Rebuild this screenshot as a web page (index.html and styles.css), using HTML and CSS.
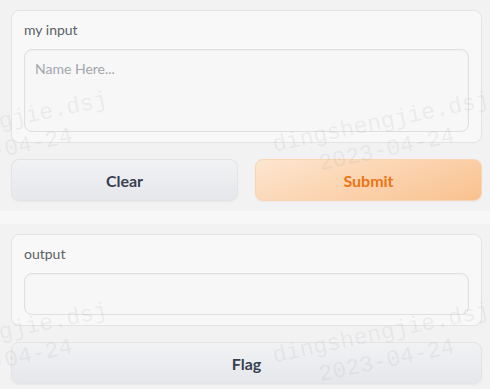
FILE: index.html
```html
<!DOCTYPE html>
<html lang="en">
<head>
    <meta charset="UTF-8">
    <meta name="viewport" content="width=device-width, initial-scale=1.0">
    <title>Gradio Demo</title>
    <link rel="stylesheet" href="styles.css">
</head>
<body>
    <div class="app">
        <div class="panel">
            <div class="block">
                <label class="block-label" for="name">my input</label>
                <textarea id="name" class="input-area" rows="3" placeholder="Name Here..."></textarea>
            </div>
            <div class="btn-row">
                <button class="btn">Clear</button>
                <button class="btn primary">Submit</button>
            </div>
        </div>

        <div class="panel">
            <div class="block">
                <label class="block-label" for="out">output</label>
                <textarea id="out" class="output-area" rows="1"></textarea>
            </div>
            <div class="btn-row">
                <button class="btn">Flag</button>
            </div>
        </div>
    </div>

    <div class="watermarks">
        <div class="wm" style="left:-112px; top:132px;"><span>dingshengjie.dsj</span><span>2023-04-24</span></div>
        <div class="wm" style="left:270px; top:132px;"><span>dingshengjie.dsj</span><span>2023-04-24</span></div>
        <div class="wm" style="left:-112px; top:343px;"><span>dingshengjie.dsj</span><span>2023-04-24</span></div>
        <div class="wm" style="left:270px; top:343px;"><span>dingshengjie.dsj</span><span>2023-04-24</span></div>
    </div>
</body>
</html>
```

FILE: styles.css
```css
* {
    margin: 0;
    padding: 0;
    box-sizing: border-box;
}
body {
    background: #f7f7f7;
    font-family: 'Lato', 'Noto Sans', sans-serif;
    overflow: hidden;
    width: 490px;
    height: 389px;
}
.app {
    display: flex;
    flex-direction: column;
    gap: 13px;
}
.panel {
    background: #f2f2f3;
    padding: 10px 8px 10px 11px;
    display: flex;
    flex-direction: column;
    gap: 16px;
}
.block {
    background: #f8f8f8;
    border: 1px solid #e3e3e3;
    border-radius: 8px;
    padding: 9px 12px 10px 12px;
    display: flex;
    flex-direction: column;
}
.block-label {
    color: #5b5f66;
    font-size: 14px;
    line-height: 20px;
    margin-bottom: 9px;
}
textarea {
    display: block;
    width: 100%;
    resize: none;
    background: #f7f7f7;
    border: 1px solid #dfdfdf;
    border-radius: 8px;
    font-family: inherit;
    font-size: 14px;
    color: #374151;
    padding: 10px;
    outline: none;
    box-shadow: inset 0 1px 2px rgba(0, 0, 0, 0.03);
}
textarea::placeholder {
    color: #a2a6ad;
}
.input-area {
    height: 83px;
}
.output-area {
    height: 42px;
}
.btn-row {
    display: flex;
    gap: 17px;
}
.btn {
    flex: 1;
    height: 42px;
    border: 1px solid #e4e4e6;
    border-radius: 8px;
    background: linear-gradient(180deg, #f1f2f4, #e6e7ea);
    color: #374151;
    font-family: inherit;
    font-size: 16px;
    font-weight: 700;
    box-shadow: 0 1px 2px rgba(0, 0, 0, 0.04);
}
.btn.primary {
    border-color: #f9d5b3;
    background: linear-gradient(160deg, #fde6d0, #f9c18f);
    color: #ec7415;
}
.watermarks {
    position: absolute;
    inset: 0;
    pointer-events: none;
    overflow: hidden;
}
.wm {
    position: absolute;
    display: flex;
    flex-direction: column;
    align-items: center;
    transform: rotate(-12deg);
    transform-origin: 0 0;
    font-family: 'Liberation Mono', monospace;
    font-size: 23px;
    line-height: 28px;
    color: rgba(150, 150, 150, 0.13);
    white-space: nowrap;
}
```
